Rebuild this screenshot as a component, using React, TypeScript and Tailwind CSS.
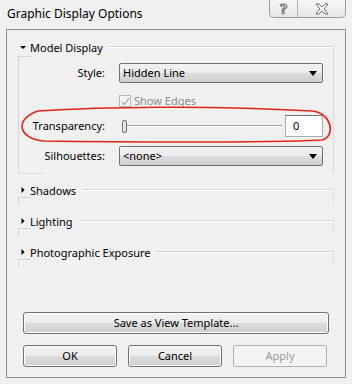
import React from "react";

const btn =
  "h-[22px] rounded-[3px] border border-[#707070] bg-[linear-gradient(#f2f2f2_0%,#ebebeb_50%,#dddddd_51%,#cfcfcf_100%)] text-[11px] text-black flex items-center justify-center shadow-[inset_0_0_0_1px_#fcfcfc]";

function Arrow({ open }: { open: boolean }) {
  return open ? (
    <svg width="10" height="10" viewBox="0 0 10 10" className="shrink-0">
      <path d="M2 4 L8 4 L5 7 Z" fill="#000" />
    </svg>
  ) : (
    <svg width="10" height="10" viewBox="0 0 10 10" className="shrink-0">
      <path d="M3.5 2 L6.5 5 L3.5 8 Z" fill="#000" />
    </svg>
  );
}

function Select({ value }: { value: string }) {
  return (
    <div className="w-[204px] h-[20px] rounded-[2px] border border-[#707070] bg-[linear-gradient(#f2f2f2_0%,#ebebeb_50%,#dddddd_51%,#cfcfcf_100%)] flex items-center pl-[3px] pr-[5px] text-[11px]">
      <span className="flex-1">{value}</span>
      <svg width="8" height="5" viewBox="0 0 8 5">
        <path d="M0 0 L8 0 L4 5 Z" fill="#000" />
      </svg>
    </div>
  );
}

function Collapsed({ title }: { title: string }) {
  return (
    <div className="ml-[11px] mr-[11px] h-[22px] flex flex-col">
      <div className="h-[14px] flex items-center">
        <Arrow open={false} />
        <span className="ml-[2px] text-[11px] leading-none">{title}</span>
        <div className="ml-[6px] flex-1 h-[2px] border-t border-[#d5d5d5] border-b-white border-b" />
      </div>
      <div className="flex-1 flex justify-between">
        <div className="w-[13px] border-t border-l border-[#d5d5d5]" />
        <div className="w-[1px] bg-[#e0e0e0] -mt-[7px]" />
      </div>
    </div>
  );
}

export default function App() {
  return (
    <div
      className="relative w-[352px] h-[384px] overflow-hidden bg-[#f0f0f0] text-black"
      style={{ fontFamily: '"Noto Sans", "Liberation Sans", sans-serif' }}
    >
      {/* title bar */}
      <div className="h-[29px] flex items-start justify-between">
        <div className="pl-[7px] pt-[6px] text-[12px] leading-[16px]">Graphic Display Options</div>
        <div className="mr-[6px] flex h-[18px] border border-t-0 border-[#9a9a9a] rounded-b-[5px] bg-[linear-gradient(#f7f7f7,#e6e6e6)] overflow-hidden">
          <div className="w-[28px] flex items-center justify-center border-r border-[#b5b5b5] text-[14px] font-bold text-white leading-none [-webkit-text-stroke:1px_#666]">
            ?
          </div>
          <div className="w-[47px] flex items-center justify-center">
            <svg width="16" height="12" viewBox="0 0 16 12">
              <path
                d="M2 1 L5 1 L8 4 L11 1 L14 1 L10 6 L14 11 L11 11 L8 8 L5 11 L2 11 L6 6 Z"
                fill="#fff"
                stroke="#6b6b6b"
                strokeWidth="1"
                strokeLinejoin="round"
              />
            </svg>
          </div>
        </div>
      </div>

      {/* main panel */}
      <div className="mx-[6px] h-[349px] border border-[#8e8f8f] bg-[#f0f0f0] flex flex-col">
        {/* Model Display group */}
        <div className="mt-[10px] ml-[11px] mr-[11px] flex flex-col">
          <div className="h-[14px] flex items-center">
            <Arrow open={true} />
            <span className="ml-[2px] text-[11px] leading-none">Model Display</span>
            <div className="ml-[6px] flex-1 h-[2px] border-t border-[#d5d5d5] border-b border-b-white" />
          </div>
          <div className="flex">
            <div className="w-[13px] mt-[2px] border-t border-l border-[#d5d5d5]" />
            <div className="flex-1 border-r border-[#d8d8d8] -mt-[7px] pt-[7px] pb-[7px] flex flex-col">
              <div className="mt-[9px] flex items-center">
                <div className="w-[74px] text-right text-[11px]">Style:</div>
                <div className="ml-[14px]">
                  <Select value="Hidden Line" />
                </div>
              </div>
              <div className="mt-[11px] h-[14px] flex items-center">
                <div className="ml-[88px] w-[12px] h-[12px] border border-[#b8b8b8] bg-[#f4f4f4] flex items-center justify-center">
                  <svg width="9" height="9" viewBox="0 0 9 9">
                    <path d="M1 5 L3.5 7.5 L8 1" fill="none" stroke="#a8a8a8" strokeWidth="1.3" />
                  </svg>
                </div>
                <span className="ml-[3px] text-[11px] text-[#8d8d8d]">Show Edges</span>
              </div>
              <div className="mt-[7px] h-[22px] flex items-center">
                <div className="w-[74px] text-right text-[11px]">Transparency:</div>
                <div className="ml-[17px] w-[160px] relative flex items-center">
                  <div className="w-[5px] h-[13px] rounded-[2px] border border-[#707070] bg-[linear-gradient(90deg,#f2f2f2,#d8d8d8)]" />
                  <div className="flex-1 h-[2px] border-t border-[#a0a0a0] border-b border-b-white" />
                </div>
                <div className="ml-[3px] w-[38px] h-[22px] bg-white border border-[#abadb3] border-t-[#707070] flex items-center pl-[7px] text-[11px]">
                  0
                </div>
              </div>
              <div className="mt-[9px] flex items-center">
                <div className="w-[74px] text-right text-[11px]">Silhouettes:</div>
                <div className="ml-[14px]">
                  <Select value="<none>" />
                </div>
              </div>
            </div>
          </div>
          <div className="w-[26px] h-px bg-[#dcdcdc]" />
        </div>

        <div className="mt-[9px]">
          <Collapsed title="Shadows" />
        </div>
        <div className="mt-[9px]">
          <Collapsed title="Lighting" />
        </div>
        <div className="mt-[9px]">
          <Collapsed title="Photographic Exposure" />
        </div>

        <div className="mt-auto mb-[10px] px-[16px] flex flex-col gap-[11px]">
          <div className={btn}>Save as View Template...</div>
          <div className="flex gap-[11px]">
            <div className={btn + " w-[94px]"}>OK</div>
            <div className={btn + " w-[94px]"}>Cancel</div>
            <div className="w-[94px] h-[22px] rounded-[3px] border border-[#adb2b5] bg-[#f4f4f4] text-[11px] text-[#9a9a9a] flex items-center justify-center">
              Apply
            </div>
          </div>
        </div>
      </div>

      {/* red hand-drawn mark */}
      <svg className="absolute left-0 top-0 pointer-events-none" width="352" height="384">
        <path
          d="M38 111 C100 107, 210 105, 312 111 C332 113, 336 136, 322 140 C260 143, 110 142, 44 141 C18 139, 14 119, 38 111"
          fill="none"
          stroke="#e3231b"
          strokeWidth="1.6"
        />
      </svg>
    </div>
  );
}
